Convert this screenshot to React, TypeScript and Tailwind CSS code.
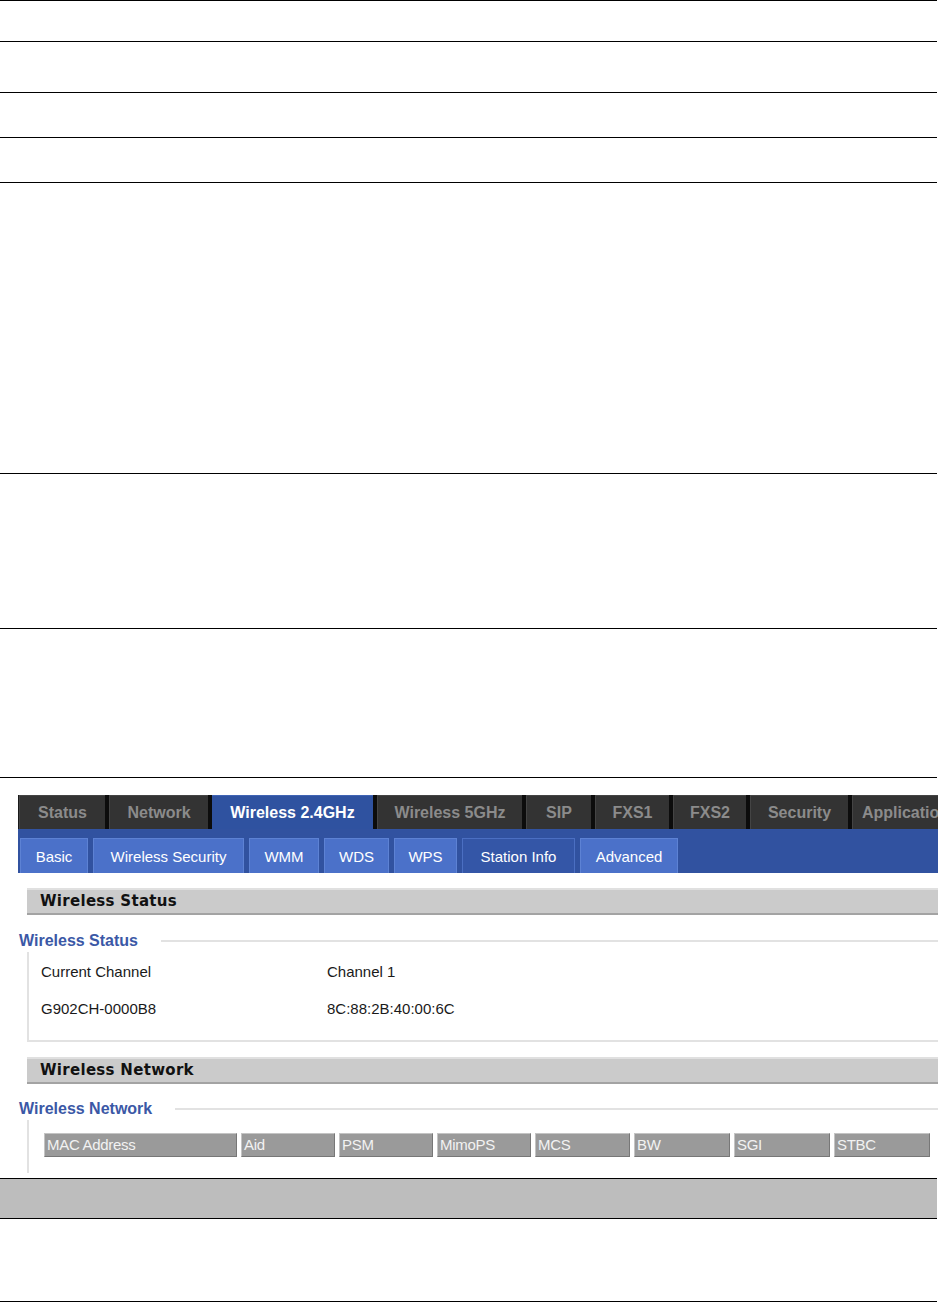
const sans = "font-['Liberation_Sans',Arial,sans-serif]";

const topTabs = [
  { label: "Status", w: "w-[87px]" },
  { label: "Network", w: "w-[103px]" },
  { label: "Wireless 2.4GHz", w: "w-[165px]", active: true },
  { label: "Wireless 5GHz", w: "w-[149px]" },
  { label: "SIP", w: "w-[69px]" },
  { label: "FXS1", w: "w-[78px]" },
  { label: "FXS2", w: "w-[77px]" },
  { label: "Security", w: "w-[102px]" },
  { label: "Application", w: "w-[110px]" },
];

const subTabs = [
  { label: "Basic", w: "w-[68px]" },
  { label: "Wireless Security", w: "w-[151px]" },
  { label: "WMM", w: "w-[70px]" },
  { label: "WDS", w: "w-[65px]" },
  { label: "WPS", w: "w-[63px]" },
  { label: "Station Info", w: "w-[113px]", active: true },
  { label: "Advanced", w: "w-[98px]" },
];

const columns = [
  { label: "MAC Address", w: "w-[193px]" },
  { label: "Aid", w: "w-[94px]" },
  { label: "PSM", w: "w-[94px]" },
  { label: "MimoPS", w: "w-[94px]" },
  { label: "MCS", w: "w-[95px]" },
  { label: "BW", w: "w-[96px]" },
  { label: "SGI", w: "w-[96px]" },
  { label: "STBC", w: "w-[96px]" },
];

function SectionBar({ title }: { title: string }) {
  return (
    <div className="ml-[9px] h-[27px] bg-[#cbcbcb] border-t-2 border-t-[#e0e0e0] border-b-2 border-b-[#a3a3a3] flex items-center pl-[13px]">
      <span className="font-['DejaVu_Sans',Verdana,sans-serif] font-bold text-[15px] text-[#111] tracking-[0.3px]">
        {title}
      </span>
    </div>
  );
}

function Legend({ title, lineStart }: { title: string; lineStart: string }) {
  return (
    <div className="flex items-center h-[22px]">
      <span className={`${sans} font-bold text-[16px] text-[#3b58a6] ml-[1px]`}>{title}</span>
      <div className={`flex-1 h-[2px] bg-[#e2e2e2] ${lineStart}`} />
    </div>
  );
}

function RouterShot() {
  return (
    <div className={`ml-[18px] w-[920px] h-[383px] overflow-hidden bg-white ${sans}`}>
      {/* top menu */}
      <div className="flex h-[34px] bg-[#0e0e0e] whitespace-nowrap">
        {topTabs.map((t, i) => (
          <div
            key={t.label}
            className={`${t.w} shrink-0 flex ${i === 0 ? "border-l border-[#1a1a1a]" : "border-l-[4px] border-[#0c0c0c]"}`}
          >
            <div
              className={`flex-1 flex items-center justify-center font-bold text-[16px] ${
                t.active
                  ? "bg-[#2f52a0] text-white border-t border-[#4064b4]"
                  : "bg-[#333333] text-[#8b8b8b] border-t border-l border-[#444]"
              }`}
            >
              {t.label}
            </div>
          </div>
        ))}
      </div>
      {/* sub menu */}
      <div className="h-[44px] bg-[#3152a0] flex items-end gap-[5px] pl-[2px]">
        {subTabs.map((t) => (
          <div
            key={t.label}
            className={`${t.w} shrink-0 h-[35px] flex items-center justify-center pt-[2px] text-[15px] text-white border-t border-l border-r ${
              t.active
                ? "bg-[#3456a7] border-[#4b6fc2]"
                : "bg-[#4b71c9] border-[#5d82d4]"
            }`}
          >
            {t.label}
          </div>
        ))}
      </div>

      <div className="mt-[15px]">
        <SectionBar title="Wireless Status" />
        <div className="mt-[15px]">
          <Legend title="Wireless Status" lineStart="ml-[23px]" />
          <div className="ml-[9px] border-l-2 border-b-2 border-[#e2e2e2] h-[90px] pt-[10px] pl-[12px] text-[15px] text-[#1a1a1a]">
            <div className="flex h-[20px] items-center">
              <span className="w-[286px]">Current Channel</span>
              <span>Channel 1</span>
            </div>
            <div className="flex h-[20px] items-center mt-[17px]">
              <span className="w-[286px]">G902CH-0000B8</span>
              <span>8C:88:2B:40:00:6C</span>
            </div>
          </div>
        </div>

        <div className="mt-[15px]">
          <SectionBar title="Wireless Network" />
        </div>
        <div className="mt-[14px]">
          <Legend title="Wireless Network" lineStart="ml-[23px]" />
          <div className="ml-[9px] border-l-2 border-[#e2e2e2] h-[53px] pt-[13px] pl-[15px]">
            <div className="flex gap-[4px]">
              {columns.map((c) => (
                <div
                  key={c.label}
                  className={`${c.w} shrink-0 h-[24px] bg-[#9a9a9a] border border-t-[#c4c4c4] border-l-[#c4c4c4] border-r-[#777] border-b-[#777] flex items-center pl-[2px] text-[15px] text-[#f2f2f2] tracking-[-0.3px]`}
                >
                  {c.label}
                </div>
              ))}
            </div>
          </div>
        </div>
      </div>
    </div>
  );
}

export default function App() {
  const rows = ["h-[41px]", "h-[51px]", "h-[45px]", "h-[45px]", "h-[291px]", "h-[155px]", "h-[149px]"];
  return (
    <div className="w-[938px] h-[1304px] bg-white overflow-hidden">
      <div className="w-[937px]">
        {rows.map((h, i) => (
          <div key={i} className={`${h} border-t border-black`} />
        ))}
        <div className="h-[401px] border-t border-black pt-[17px]">
          <RouterShot />
        </div>
        <div className="h-[40px] border-t border-black bg-[#bdbdbd]" />
        <div className="h-[84px] border-t border-b border-black" />
      </div>
    </div>
  );
}
